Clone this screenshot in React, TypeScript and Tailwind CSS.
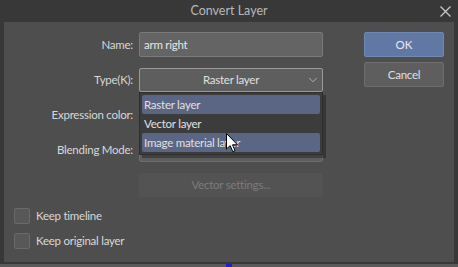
import { ChevronDown } from 'lucide-react';

const font = { fontFamily: 'Lato, "Open Sans", sans-serif' };

function Label({ text }: { text: string }) {
  return <div className="w-[119px] shrink-0 text-right text-[11.5px] tracking-[-0.25px] text-[#d8d8d8]">{text}</div>;
}

function SelectBox({ value, active }: { value: string; active?: boolean }) {
  return (
    <div
      className={`relative flex h-[24px] w-[184px] items-center justify-center rounded-[2px] border bg-[#5e5e5e] text-[11.5px] tracking-[-0.25px] text-[#e0e0e0] ${
        active ? 'border-[#9a9a9a]' : 'border-[#6c6c6c]'
      }`}
    >
      {value}
      <ChevronDown className="absolute right-[2px] h-[14px] w-[14px] text-[#c8c8c8]" strokeWidth={1.3} />
    </div>
  );
}

function Check({ label }: { label: string }) {
  return (
    <div className="flex items-center gap-[6px]">
      <div className="h-[16px] w-[16px] rounded-[2px] border border-[#6a6a6a] bg-[#585858]" />
      <span className="text-[11.5px] leading-[16px] tracking-[-0.25px] text-[#d8d8d8]">{label}</span>
    </div>
  );
}

function Cursor() {
  return (
    <svg width="13" height="20" viewBox="0 0 13 20" className="absolute left-[226px] top-[133px]">
      <path d="M0.5 0.5 L0.5 16 L4.2 12.6 L6.8 18.6 L9 17.6 L6.5 11.8 L11.5 11.8 Z" fill="#fff" stroke="#000" strokeWidth="1" />
    </svg>
  );
}

export default function App() {
  return (
    <div className="relative h-[267px] w-[458px] overflow-hidden bg-[#5a5a5a]" style={font}>
      <div className="flex h-[264px] flex-col bg-[#383838] px-[4px]">
        {/* Title */}
        <div className="relative flex h-[22px] shrink-0 items-center justify-center text-[12.5px] text-[#b8b8b8]">
          Convert Layer
          <svg width="11" height="11" viewBox="0 0 11 11" className="absolute right-[3px] top-[6px]">
            <path d="M0.5 0.5 L10.5 10.5 M10.5 0.5 L0.5 10.5" stroke="#c8c8c8" strokeWidth="1.3" />
          </svg>
        </div>

        {/* Body */}
        <div className="flex h-[240px] bg-[#4e4e4e] pl-[10px] pr-[10px] pt-[10px]">
          <div className="flex flex-col">
            <div className="flex flex-col gap-[11px]">
              <div className="flex items-center gap-[6px]">
                <Label text="Name:" />
                <div className="flex h-[25px] w-[184px] items-center rounded-[2px] border border-[#7a7a7a] bg-[#646464] px-[4px] text-[11.5px] tracking-[-0.25px] text-[#e6e6e6]">
                  arm right
                </div>
              </div>
              <div className="flex items-center gap-[6px]">
                <Label text="Type(K):" />
                <SelectBox value="Raster layer" active />
              </div>
              <div className="flex items-center gap-[6px]">
                <Label text="Expression color:" />
                <SelectBox value="Color" />
              </div>
              <div className="flex items-center gap-[6px]">
                <Label text="Blending Mode:" />
                <SelectBox value="Normal" />
              </div>
              <div className="flex items-center gap-[6px]">
                <div className="w-[119px] shrink-0" />
                <div className="flex h-[24px] w-[184px] items-center justify-center rounded-[2px] bg-[#535353] text-[11.5px] tracking-[-0.25px] text-[#7c7c7c]">
                  Vector settings...
                </div>
              </div>
            </div>
            <div className="mt-[11px] flex flex-col gap-[9px]">
              <Check label="Keep timeline" />
              <Check label="Keep original layer" />
            </div>
          </div>

          <div className="ml-auto flex w-[80px] flex-col gap-[5px]">
            <div className="flex h-[25px] items-center justify-center rounded-[2px] border border-[#7088b4] bg-[#6178a5] text-[11.5px] text-[#e8e8e8]">
              OK
            </div>
            <div className="flex h-[25px] items-center justify-center rounded-[2px] border border-[#6e6e6e] bg-[#5e5e5e] text-[11.5px] tracking-[-0.25px] text-[#e0e0e0]">
              Cancel
            </div>
          </div>
        </div>
      </div>
      <div className="absolute bottom-0 left-[226px] h-[3px] w-[6px] bg-[#2020c8]" />

      {/* Dropdown list */}
      <div className="absolute left-[139px] top-[92px] w-[184px] border border-[#2e2e2e] bg-[#3c3c3c] p-[2px] text-[11.5px] tracking-[-0.25px] text-[#e0e0e0] shadow-[3px_3px_0_rgba(0,0,0,0.3)]">
        <div className="flex h-[19px] items-center rounded-[2px] bg-[#5b6684] px-[2px]">Raster layer</div>
        <div className="flex h-[19px] items-center px-[2px]">Vector layer</div>
        <div className="flex h-[19px] items-center rounded-[2px] bg-[#5b6684] px-[2px]">Image material layer</div>
      </div>
      <Cursor />
    </div>
  );
}
